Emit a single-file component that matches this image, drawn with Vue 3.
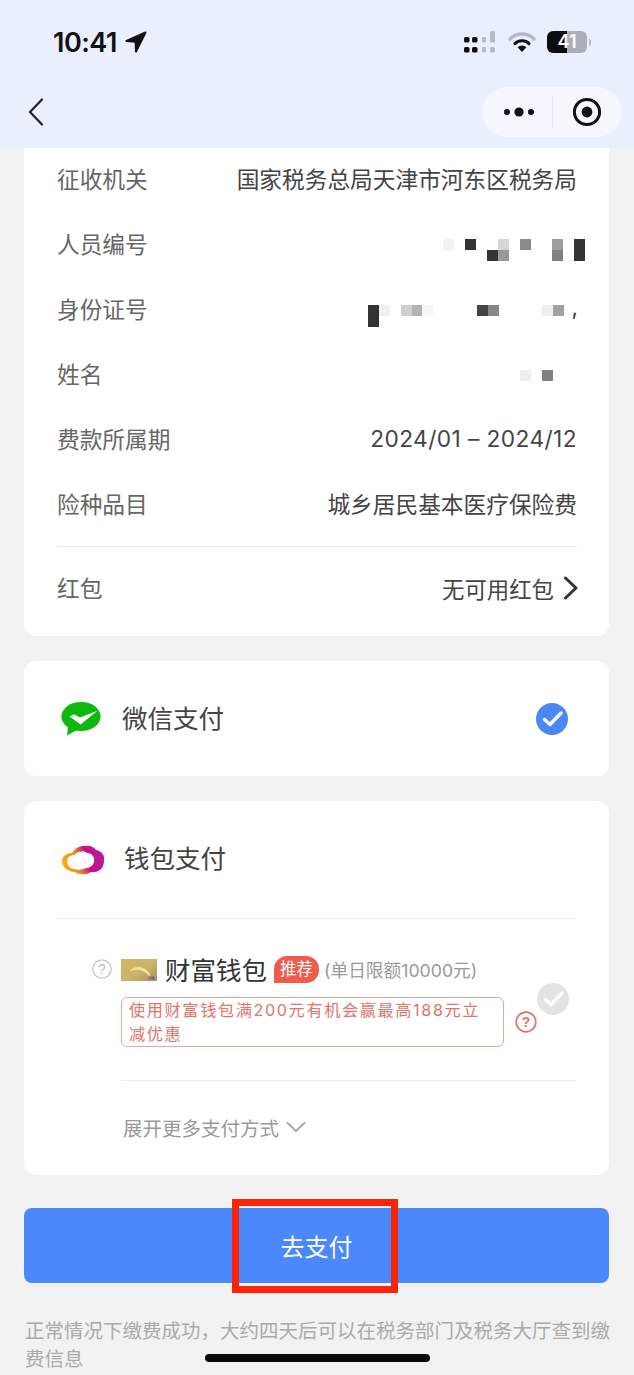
<template>
  <div class="page">
    <header class="header">
      <div class="status-bar">
        <div class="clock">
          <span>10:41</span>
          <svg class="location" viewBox="0 0 22 22" width="22" height="22">
            <path d="M20.5 1.5 L1.5 10 L10.6 10.8 L11 20.5 Z" fill="#111" stroke="#111" stroke-width="2" stroke-linejoin="round" />
          </svg>
        </div>
        <div class="status-icons">
          <svg viewBox="0 0 32 22" width="32" height="22">
            <rect x="0" y="6" width="5.5" height="5.5" rx="1.6" fill="#111" />
            <rect x="8" y="6" width="5.5" height="5.5" rx="1.6" fill="#111" />
            <rect x="0" y="16" width="5.5" height="5.5" rx="1.6" fill="#111" />
            <rect x="8" y="16" width="5.5" height="5.5" rx="1.6" fill="#111" />
            <rect x="18" y="6" width="4" height="5.5" rx="1.4" fill="#b4b9c6" />
            <rect x="18" y="16" width="4" height="5.5" rx="1.4" fill="#b4b9c6" />
            <rect x="26" y="0" width="5" height="11.5" rx="1.6" fill="#b4b9c6" />
            <rect x="26" y="16" width="5" height="5.5" rx="1.6" fill="#b4b9c6" />
          </svg>
          <svg class="wifi" viewBox="0 0 28 20" width="28" height="20">
            <path d="M2 7 A17 17 0 0 1 26 7" fill="none" stroke="#b4b9c6" stroke-width="3.4" stroke-linecap="round" />
            <path d="M7 11.6 A10 10 0 0 1 21 11.6" fill="none" stroke="#111" stroke-width="3.2" stroke-linecap="round" />
            <path d="M14 20 L9.6 15.2 A6.4 6.4 0 0 1 18.4 15.2 Z" fill="#111" />
          </svg>
          <div class="battery"><span>41</span></div>
          <i class="battery-nub"></i>
        </div>
      </div>
      <div class="nav-bar">
        <svg class="back" viewBox="0 0 16 28" width="16" height="28">
          <path d="M14 1.5 L2 14 L14 26.5" fill="none" stroke="#222" stroke-width="2.2" stroke-linecap="round" stroke-linejoin="round" />
        </svg>
        <div class="capsule">
          <svg viewBox="0 0 32 12" width="32" height="12">
            <circle cx="4" cy="6" r="3" fill="#111" />
            <circle cx="16" cy="6" r="4.6" fill="#111" />
            <circle cx="28" cy="6" r="3" fill="#111" />
          </svg>
          <i class="capsule-line"></i>
          <svg viewBox="0 0 30 30" width="30" height="30">
            <circle cx="15" cy="15" r="12.6" fill="none" stroke="#111" stroke-width="3" />
            <circle cx="15" cy="15" r="5.4" fill="#111" />
          </svg>
        </div>
      </div>
    </header>

    <main class="content">
      <section class="card info-card">
        <div v-for="row in rows" :key="row.label" class="info-row">
          <span class="label">{{ row.label }}</span>
          <span v-if="row.value" class="value" :class="row.valueCls">{{ row.value }}</span>
          <div v-else class="mosaic" :class="row.cls">
            <i
              v-for="(c, i) in row.cells"
              :key="i"
              :style="{ gridColumn: c[0] + 1, gridRow: `${c[1] + 1} / span ${c[3] || 1}`, background: c[2] }"
            ></i>
            <b v-if="row.comma">,</b>
          </div>
        </div>
        <div class="info-row coupon-row">
          <span class="label">红包</span>
          <span class="coupon">
            <span class="value">无可用红包</span>
            <svg viewBox="0 0 16 24" width="16" height="24">
              <path d="M2.5 2 L13 12 L2.5 22" fill="none" stroke="#333" stroke-width="3" stroke-linecap="round" stroke-linejoin="round" />
            </svg>
          </span>
        </div>
      </section>

      <section class="card wechat-card">
        <svg viewBox="0 0 40 34" width="40" height="34">
          <ellipse cx="20" cy="14.5" rx="19.6" ry="14.5" fill="#0fb80f" />
          <path d="M7 24 L6 33.5 L17 27.5 Z" fill="#0fb80f" />
          <path d="M8.6 14.6 L13 12.2 L19 15.6 L36.4 8.8 L19.6 22.4 Z" fill="#fff" />
        </svg>
        <span class="pay-name">微信支付</span>
        <svg class="check" viewBox="0 0 32 32" width="32" height="32">
          <circle cx="16" cy="16" r="16" fill="#4a88f7" />
          <path d="M8.5 16.5 L14 21.5 L25 10" fill="none" stroke="#fff" stroke-width="3.4" stroke-linecap="round" stroke-linejoin="round" />
        </svg>
      </section>

      <section class="card wallet-card">
        <div class="wallet-head">
          <svg viewBox="0 0 44 30" width="44" height="30">
            <defs>
              <linearGradient id="ringGrad" x1="0" y1="0.6" x2="1" y2="0.4">
                <stop offset="0" stop-color="#f9ad0c" />
                <stop offset="0.35" stop-color="#ef8f1a" />
                <stop offset="0.6" stop-color="#c2168c" />
                <stop offset="1" stop-color="#b51c98" />
              </linearGradient>
            </defs>
            <path d="M1 16 C1 11 6 8 11 8 C14 3 19 0.5 24 1 C29 0 33 2 35 5 C41 6 44 11 43 16 C43 24 37 28 30 27 C25 30 18 30 14 27 C8 27 1 23 1 16 Z" fill="url(#ringGrad)" />
            <path d="M6 16 C6 12 10 10 13 10 C16 7 22 5 26 8 C31 8 34 12 33 17 C32 21 28 23 25 23 C21 25 15 25 13 24 C9 24 6 20 6 16 Z" fill="#fff" />
          </svg>
          <span class="pay-name">钱包支付</span>
        </div>
        <div class="option">
          <svg class="help" viewBox="0 0 20 20" width="20" height="20">
            <circle cx="10" cy="10" r="9.2" fill="none" stroke="#c4c4c4" stroke-width="1.3" />
            <text x="10" y="15" text-anchor="middle" font-size="14" fill="#bdbdbd" font-family="Liberation Sans, sans-serif">?</text>
          </svg>
          <div class="option-body">
            <div class="option-title">
              <svg class="thumb" viewBox="0 0 36 22" width="36" height="22">
                <defs>
                  <linearGradient id="thumbGrad" x1="0" y1="0" x2="1" y2="1">
                    <stop offset="0" stop-color="#d3b562" />
                    <stop offset="0.55" stop-color="#cdb36a" />
                    <stop offset="1" stop-color="#9f9468" />
                  </linearGradient>
                </defs>
                <rect width="36" height="22" fill="url(#thumbGrad)" />
                <path d="M8 13 C13 6 23 6 29 15 L29 18 C23 10 14 9 8 13 Z" fill="#efe49a" />
                <circle cx="29" cy="19" r="1.7" fill="#d9534f" />
                <circle cx="32" cy="19" r="1.7" fill="#3d6fb5" />
              </svg>
              <span class="option-name">财富钱包</span>
              <span class="badge">推荐</span>
              <span class="limit">(单日限额10000元)</span>
            </div>
            <div class="promo-row">
              <p class="promo">使用财富钱包满200元有机会赢最高188元立减优惠</p>
              <svg viewBox="0 0 22 22" width="22" height="22">
                <circle cx="11" cy="11" r="9.8" fill="none" stroke="#e2736a" stroke-width="1.7" />
                <text x="11" y="16" text-anchor="middle" font-size="14" font-weight="700" fill="#e2736a" font-family="Liberation Sans, sans-serif">?</text>
              </svg>
            </div>
            <svg class="check-off" viewBox="0 0 32 32" width="32" height="32">
              <circle cx="16" cy="16" r="16" fill="#e3e3e3" />
              <path d="M8.5 16.5 L14 21.5 L25 10" fill="none" stroke="#fff" stroke-width="3.4" stroke-linecap="round" stroke-linejoin="round" />
            </svg>
            <div class="more">
              <span>展开更多支付方式</span>
              <svg viewBox="0 0 20 12" width="20" height="12">
                <path d="M1.5 2 L10 10 L18.5 2" fill="none" stroke="#aaa" stroke-width="2" stroke-linecap="round" stroke-linejoin="round" />
              </svg>
            </div>
          </div>
        </div>
      </section>

      <div class="pay-wrap">
        <button class="pay-btn">去支付</button>
        <div class="highlight"></div>
      </div>

      <p class="note">正常情况下缴费成功，大约四天后可以在税务部门及税务大厅查到缴费信息</p>
    </main>

    <div class="home-bar"></div>
  </div>
</template>

<script setup>
const rows = [
  { label: '征收机关', value: '国家税务总局天津市河东区税务局' },
  {
    label: '人员编号',
    cls: 'mosaic-id',
    cells: [
      [0, 0, '#f2f2f2'], [2, 0, '#333'], [5, 0, '#d6d6d6'], [4, 1, '#333'], [5, 1, '#999'],
      [7, 0, '#8a8a8a'], [10, 0, '#9c9c9c'], [10, 1, '#808080'], [12, 0, '#333', 2],
    ],
  },
  {
    label: '身份证号',
    cls: 'mosaic-card',
    comma: true,
    cells: [
      [0, 0, '#333', 2], [1, 0, '#efefef'], [3, 0, '#cfcfcf'], [4, 0, '#b2b2b2'], [5, 0, '#f6f6f6'],
      [10, 0, '#444'], [11, 0, '#888'], [16, 0, '#eee'], [17, 0, '#a2a2a2'],
    ],
  },
  {
    label: '姓名',
    cls: 'mosaic-name',
    cells: [[0, 0, '#eee'], [2, 0, '#808080']],
  },
  { label: '费款所属期', value: '2024/01 – 2024/12', valueCls: 'period' },
  { label: '险种品目', value: '城乡居民基本医疗保险费' },
]
</script>

<style>
html,
body {
  margin: 0;
  background: #f2f2f2;
}
</style>

<style scoped>
.page {
  position: relative;
  height: 1375px;
  overflow: hidden;
  background: #f2f2f2;
  font-family: Inter, "Noto Sans CJK SC", "Liberation Sans", sans-serif;
}

.header {
  height: 148px;
  background: #e9effd;
}

.status-bar {
  height: 84px;
  display: flex;
  justify-content: space-between;
  align-items: center;
  padding: 0 42px 0 53px;
}

.clock {
  display: flex;
  align-items: center;
  gap: 8px;
  font-size: 27px;
  font-weight: 600;
  letter-spacing: -0.5px;
  color: #111;
}

.status-icons {
  display: flex;
  align-items: center;
}

.wifi {
  margin-left: 12px;
}

.battery {
  width: 40px;
  height: 22px;
  margin-left: 11px;
  border-radius: 6px;
  background: linear-gradient(90deg, #0d0d0d 50%, #a9aebb 50%);
  color: #fff;
  font-size: 18px;
  font-weight: 600;
  line-height: 22px;
  text-align: center;
}

.battery-nub {
  width: 2px;
  height: 7px;
  margin: 0 1px 0 2px;
  border-radius: 0 2px 2px 0;
  background: #b4b9c6;
}

.nav-bar {
  display: flex;
  justify-content: space-between;
  align-items: center;
  height: 56px;
  padding: 0 12px 0 28px;
}

.capsule {
  display: flex;
  align-items: center;
  width: 140px;
  height: 50px;
  box-sizing: border-box;
  padding: 0 19px 0 21px;
  border-radius: 25px;
  background: #f4f7fe;
}

.capsule-line {
  width: 1px;
  height: 30px;
  margin: 0 19px 0 17px;
  background: #e2e5ec;
}

.content {
  padding: 0 25px 0 24px;
}

.card {
  background: #fff;
  border-radius: 12px;
}

.info-card {
  padding: 0 32px 7px 33px;
  border-radius: 0 0 12px 12px;
}

.info-row {
  display: flex;
  justify-content: space-between;
  align-items: center;
  height: 65px;
  box-sizing: border-box;
  padding-bottom: 5px;
  font-size: 22.7px;
}

.label {
  color: #666;
}

.value {
  color: #444;
}

.period {
  letter-spacing: 0.42px;
}

.mosaic {
  position: relative;
  display: grid;
  grid-auto-columns: 10.9px;
  grid-auto-rows: 11px;
  margin-right: -8px;
  margin-top: 13px;
}

.mosaic b {
  position: absolute;
  right: -14px;
  top: -12px;
  font-weight: 400;
  color: #444;
}

.mosaic-card {
  margin-right: 13px;
  margin-top: 15px;
}

.mosaic-name {
  margin-right: 24px;
  margin-top: 5px;
}

.coupon-row {
  height: 83px;
  margin-top: 8px;
  padding-bottom: 1px;
  border-top: 1px solid #e9e9e9;
}

.coupon {
  display: flex;
  align-items: center;
  gap: 9px;
  margin-right: -2px;
  font-size: 22.4px;
}

.wechat-card {
  display: flex;
  align-items: center;
  height: 115px;
  margin-top: 25px;
  padding: 0 41px 0 37px;
}

.pay-name {
  margin-left: 21px;
  margin-bottom: 5px;
  font-size: 25.5px;
  color: #444;
}

.check {
  margin-left: auto;
}

.wallet-card {
  height: 374px;
  margin-top: 25px;
  padding: 0 33px;
}

.wallet-head {
  display: flex;
  align-items: center;
  height: 117px;
  padding-left: 4px;
  border-bottom: 1px solid #eee;
}

.wallet-head .pay-name {
  margin-left: 19px;
  margin-bottom: 7px;
}

.option {
  display: flex;
  align-items: flex-start;
  gap: 9px;
  padding: 40px 0 0 35px;
}

.option-body {
  position: relative;
  flex: 1;
}

.option-title {
  display: flex;
  align-items: center;
  height: 22px;
}

.option-name {
  margin: -4px 0 0 8px;
  font-size: 25.5px;
  color: #333;
}

.badge {
  margin: -2px 0 0 7px;
  padding: 0 6px;
  height: 27px;
  line-height: 26px;
  border-radius: 13px 13px 13px 0;
  background: #ef5b4f;
  color: #fff;
  font-size: 16.5px;
}

.limit {
  margin: -2px 0 0 5px;
  font-size: 17.7px;
  color: #999;
  white-space: nowrap;
}

.promo-row {
  display: flex;
  align-items: center;
  gap: 11px;
  margin-top: 16px;
}

.promo {
  width: 383px;
  height: 50px;
  box-sizing: border-box;
  margin: 0;
  padding: 0 20px 0 7px;
  border: 1px solid #e8a79f;
  border-radius: 6px;
  color: #e0746b;
  font-size: 16.2px;
  line-height: 24px;
  letter-spacing: 1.6px;
}

.check-off {
  position: absolute;
  left: 416px;
  top: 24px;
}

.more {
  display: flex;
  align-items: center;
  gap: 7px;
  height: 92px;
  margin-top: 33px;
  padding-left: 2px;
  border-top: 1px solid #eee;
  color: #999;
  font-size: 19.5px;
}

.pay-wrap {
  position: relative;
  margin-top: 33px;
}

.pay-btn {
  display: block;
  width: 100%;
  height: 75px;
  border: 0;
  border-radius: 8px;
  background: #4a88fb;
  color: #fff;
  font-family: inherit;
  font-size: 24px;
}

.highlight {
  position: absolute;
  left: 208px;
  top: -9px;
  width: 166px;
  height: 94px;
  box-sizing: border-box;
  border: 7px solid #fb2407;
}

.note {
  margin: 34px -2px 0 1px;
  color: #aaa;
  font-size: 19.5px;
  line-height: 28px;
}

.home-bar {
  position: absolute;
  left: 205px;
  top: 1354px;
  width: 225px;
  height: 8px;
  border-radius: 4px;
  background: #0a0a0a;
}
</style>
